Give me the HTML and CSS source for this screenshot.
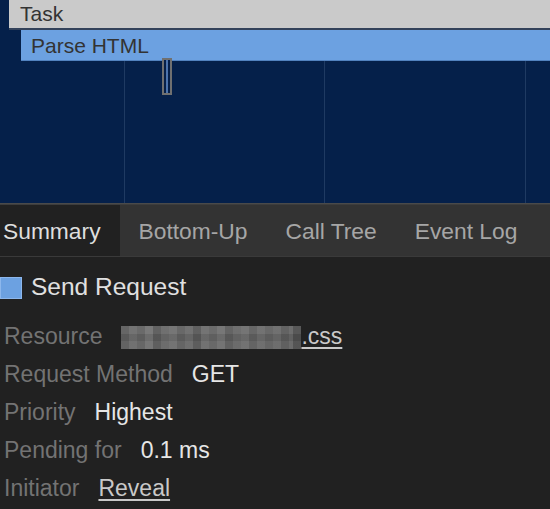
FILE: index.html
```html
<!DOCTYPE html>
<html>
<head>
<meta charset="utf-8">
<link rel="stylesheet" href="styles.css">
</head>
<body>
<div class="flame">
  <div class="task">Task</div>
  <div class="parse">Parse HTML</div>
  <div class="marker"><span class="marker-line"></span></div>
</div>
<div class="tabs">
  <div class="tab active">Summary</div>
  <div class="tab">Bottom-Up</div>
  <div class="tab">Call Tree</div>
  <div class="tab">Event Log</div>
</div>
<div class="summary">
  <div class="title"><span class="swatch"></span><span>Send Request</span></div>
  <div class="row"><span class="label">Resource</span><span class="value"><span class="blurred"></span><span class="link">.css</span></span></div>
  <div class="row"><span class="label">Request Method</span><span class="value">GET</span></div>
  <div class="row"><span class="label">Priority</span><span class="value">Highest</span></div>
  <div class="row"><span class="label">Pending for</span><span class="value">0.1 ms</span></div>
  <div class="row"><span class="label">Initiator</span><span class="value link">Reveal</span></div>
</div>
</body>
</html>
```
FILE: styles.css
```css
html, body {
  margin: 0;
  padding: 0;
}
body {
  width: 550px;
  height: 509px;
  overflow: hidden;
  background: #212121;
  font-family: "Liberation Sans", Arial, sans-serif;
}
.flame {
  position: relative;
  height: 203px;
  background-color: #05204a;
  background-image:
    linear-gradient(90deg, transparent 124px, #1f3a62 124px, #1f3a62 125px, transparent 125px),
    linear-gradient(90deg, transparent 324px, #1f3a62 324px, #1f3a62 325px, transparent 325px),
    linear-gradient(90deg, transparent 525px, #1f3a62 525px, #1f3a62 526px, transparent 526px);
  border-bottom: 1px solid #4a4a4a;
}
.task {
  margin-left: 9px;
  height: 28px;
  line-height: 28px;
  background: #cacaca;
  border-bottom: 2px solid #33425a;
  padding-left: 11px;
  font-size: 21px;
  color: #333;
}
.parse {
  margin-left: 21px;
  height: 30px;
  line-height: 31px;
  background: #6ca1e1;
  border-bottom: 1px solid #5282bf;
  padding-left: 10px;
  font-size: 21px;
  color: #333;
}
.marker {
  position: absolute;
  left: 162px;
  top: 58px;
  width: 6px;
  height: 33px;
  border: 2.5px solid #707070;
  background: #061f48;
  display: flex;
  justify-content: center;
}
.marker-line {
  width: 2px;
  background: #4d74ad;
}
.tabs {
  display: flex;
  height: 51px;
  margin-left: -16px;
  background: #333333;
  border-top: 1px solid #3d3d3d;
  border-bottom: 1px solid #3a3a3a;
}
.tab {
  padding: 1px 19px 0 19px;
  line-height: 50px;
  font-size: 22.8px;
  color: #a6a6a6;
}
.tab.active {
  background: #212121;
  color: #dedede;
}
.summary {
  padding-top: 11px;
}
.title {
  display: flex;
  align-items: center;
  gap: 9px;
  height: 38px;
  line-height: 38px;
  font-size: 24.5px;
  color: #e0e0e0;
  margin-bottom: 11px;
}
.swatch {
  width: 20px;
  height: 20px;
  background: #6ca1e1;
  border: 1px solid #8db7ec;
  margin-top: 1px;
}
.row {
  display: flex;
  align-items: baseline;
  gap: 19px;
  height: 38px;
  line-height: 38px;
  font-size: 23px;
  padding-left: 4px;
}
.label {
  color: #737373;
}
.value {
  color: #e6e6e6;
}
.link {
  color: #c9c9c9;
  text-decoration: underline;
  text-underline-offset: 3px;
}
.blurred {
  display: inline-block;
  vertical-align: -5px;
  width: 180px;
  height: 23px;
  background-image:
    linear-gradient(180deg, rgba(255,255,255,0.05) 0 8px, rgba(0,0,0,0.05) 8px 15px, rgba(255,255,255,0.03) 15px 23px),
    linear-gradient(90deg,
      #5e5e5e 0 8px, #6c6c6c 8px 16px, #626262 16px 24px, #727272 24px 32px,
      #5a5a5a 32px 40px, #686868 40px 48px, #6f6f6f 48px 56px, #606060 56px 64px,
      #6a6a6a 64px 72px, #585858 72px 80px, #6d6d6d 80px 88px, #646464 88px 96px,
      #707070 96px 104px, #5c5c5c 104px 112px, #676767 112px 120px, #6e6e6e 120px 128px,
      #5f5f5f 128px 136px, #6b6b6b 136px 144px, #616161 144px 152px, #696969 152px 160px,
      #5b5b5b 160px 168px, #666666 168px 172px, #4f4f4f 172px 180px);
  filter: blur(0.6px);
}
```
